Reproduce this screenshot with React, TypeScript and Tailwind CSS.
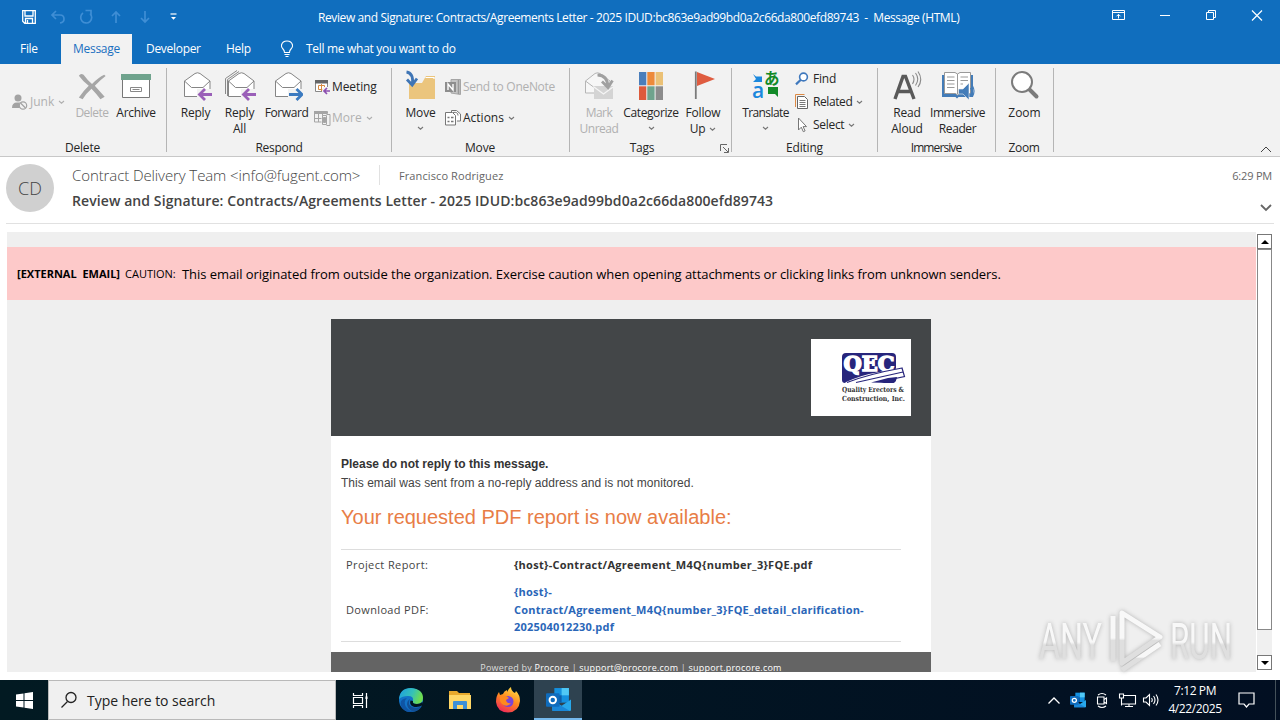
import * as React from "react";
import { clsx } from "clsx";

type IconProps = { className?: string };

function Caret({ className }: IconProps) {
  return (
    <svg width="7" height="5" viewBox="0 0 7 5" className={className}>
      <path d="M1 1l2.500 2.200L6 1" fill="none" stroke="currentColor" strokeWidth="1.100" />
    </svg>
  );
}

function EnvelopeIcon({ all, forward }: { all?: boolean; forward?: boolean }) {
  return (
    <svg width="32" height="32" viewBox="0 0 32 32" fill="none">
      {all && <path d="M1.500 25V9.500L13 1.500M3.500 27V10.500L15 2.500" stroke="#8a8a8a" />}
      <path d="M4.500 27.500V12L15 4.500q2.500-1.500 5 0L30 12v15.500z" fill="#fff" stroke="#858585" />
      <path d="M4.500 12l7 6.500H23l7-6.500" stroke="#858585" />
      <path d="M17 20h15v11H17z" fill="#f2f2f2" />
      {forward ? (
        <path d="M18 25.500h13M25.500 20l5.500 5.500-5.500 5.500" stroke="#3b7ac0" strokeWidth="2.800" />
      ) : (
        <path d="M32 25.500H19.500M25 20l-5.500 5.500 5.500 5.500" stroke="#9a5fb8" strokeWidth="2.800" />
      )}
    </svg>
  );
}

function DeleteIcon() {
  return (
    <svg width="30" height="28" viewBox="0 0 32 32" preserveAspectRatio="none" className="translate-y-0.5">
      <path d="M2 3q2-3 5-1 4 6 9 10.500Q23 5 29 2l1.500 1.500Q25 8 19 14.500q5 6 10.500 12.500L25 30q-5-7-9.500-12Q10 23 6 30L2 28Q7 20 12.500 14.500 6 9 2 3z" fill="#a6a6a6" />
    </svg>
  );
}

function ArchiveIcon() {
  return (
    <svg width="32" height="32" viewBox="0 0 32 32">
      <path d="M2.500 9h27v19.500h-27z" fill="#fff" stroke="#777" />
      <path d="M1 5h30v6H1z" fill="#6fa38d" />
      <path d="M10.500 18.500h11v4h-11zM12.500 20.500h7" fill="none" stroke="#888" />
    </svg>
  );
}

function JunkIcon() {
  return (
    <svg width="16" height="16" viewBox="0 0 16 16">
      <circle cx="6" cy="4" r="3.500" fill="#a3a3a3" />
      <path d="M0 14Q0 8.500 5 8.500h3l2 2V14z" fill="#a3a3a3" />
      <circle cx="11" cy="11.500" r="3.700" fill="#f2f2f2" stroke="#a3a3a3" strokeWidth="1.200" />
      <path d="M8.500 9l5 5" stroke="#a3a3a3" strokeWidth="1.200" />
    </svg>
  );
}

function MeetingIcon() {
  return (
    <svg width="16" height="16" viewBox="0 0 16 16" fill="none">
      <path d="M1.500 2.500h12v10h-12z" fill="#fff" stroke="#888" />
      <path d="M1 1h13v3.500H1z" fill="#666" />
      <path d="M4.500 6.500h6v4h-6zM7.500 5v7" stroke="#d98a3f" />
      <path d="M9.500 8h6.500v8H8v-5z" fill="#f2f2f2" />
      <path d="M16 12h-5.500M13 9l-3 3 3 3" stroke="#8c4fb0" strokeWidth="1.700" />
    </svg>
  );
}

function MoreIcon() {
  return (
    <svg width="17" height="16" viewBox="0 0 17 16" fill="none" stroke="#a5a5a5">
      <path d="M.5 2.500h13M.5 1.500h13v2H.5zM.5 1v11h7M.5 8.500h7M4.500 4v8M8.500 4v3" />
      <path d="M8.500 5.500h4v9h-4zM12.500 4.500h3.500v11h-3.500" fill="#f2f2f2" />
      <path d="M9.500 7.500h2v5h-2z" fill="#a5a5a5" />
    </svg>
  );
}

function MoveIcon() {
  return (
    <svg width="32" height="32" viewBox="0 0 32 32" fill="none">
      <path d="M4 14h13l4-7h9v23H4z" fill="#ebc57d" />
      <path d="M20.500 8.500h8.500v1.500" stroke="#fff" strokeWidth="1.200" />
      <path d="M1.500 3q7 1 6 12M2 10.500l5.200 5.500L12 9.500" stroke="#3f75b5" strokeWidth="2.800" />
    </svg>
  );
}

function OneNoteIcon() {
  return (
    <svg width="16" height="16" viewBox="0 0 16 16">
      <path d="M6 .5h9.500v15L6 14z" fill="#c4c4c4" stroke="#a5a5a5" />
      <path d="M13.500 1v14" stroke="#999" strokeWidth="1.500" />
      <path d="M0 3h11v10H0z" fill="#8e8e8e" />
      <path d="M3 11V5l5 6V5" fill="none" stroke="#fff" strokeWidth="1.400" />
    </svg>
  );
}

function ActionsIcon() {
  return (
    <svg width="16" height="16" viewBox="0 0 16 16" fill="none" stroke="#777">
      <path d="M6.500 2.500V.5h5l4 3.500v7H12" fill="#fff" />
      <path d="M.5 2.500h7l3 3v9.500H.5z" fill="#fff" />
      <path d="M2.500 7.500h2M6 7.500h2.500M2.500 11.500h2M6 11.500h2.500" strokeWidth="1.300" />
      <path d="M8 2.500q5-1 5 3" />
    </svg>
  );
}

function UnreadIcon() {
  return (
    <svg width="32" height="32" viewBox="0 0 32 32" fill="none">
      <path d="M2.500 24V12L12 4.500q2.500-1.500 5 0L27 12v12z" fill="#f7f7f7" stroke="#b5b5b5" />
      <path d="M2.500 12l8 6" stroke="#b5b5b5" />
      <path d="M11 17h19v13H11z" fill="#d4d4d4" />
      <path d="M11 18l9.500 7 9.500-7" stroke="#f5f5f5" strokeWidth="1.300" />
      <path d="M14.500 6q10 0 10.500 12M19 12.500l6 6 4.500-7" stroke="#a0a0a0" strokeWidth="2.800" />
    </svg>
  );
}

function CategorizeIcon() {
  return (
    <svg width="24" height="28" viewBox="0 0 24 28" className="translate-y-px">
      <path d="M0 0h7.300v13.300H0z" fill="#4a7ebb" />
      <path d="M8.300 0h7.300v13.300H8.300z" fill="#ed8a3a" />
      <path d="M16.600 0H24v13.300h-7.400z" fill="#ebc176" />
      <path d="M0 14.300h7.300V28H0z" fill="#dd5a3c" />
      <path d="M8.300 14.300h7.300V28H8.300z" fill="#6fa38d" />
      <path d="M16.600 14.300H24V28h-7.400z" fill="#8c8c8c" />
    </svg>
  );
}

function FlagIcon() {
  return (
    <svg width="22" height="30" viewBox="0 0 22 30" className="translate-x-0.5">
      <path d="M3 2l18 7-18 7z" fill="#df5c40" />
      <path d="M1.800 1.500V29" stroke="#7b7b7b" strokeWidth="1.800" />
    </svg>
  );
}

function TranslateIcon() {
  return (
    <svg width="28" height="32" viewBox="0 0 28 32" className="overflow-visible leading-none">
      <path d="M1 5l3 2.500h6v5.500H1l3-3z" fill="#1b88dd" />
      <path d="M26 18v10l-3-3h-7v-7z" fill="#128a28" />
      <text x="0" y="29" fontSize="21" fontWeight="600" fill="#1b88dd" fontFamily="Open Sans, sans-serif">a</text>
      <text x="12" y="15" fontSize="15.500" fontWeight="700" fill="#128a28" fontFamily="Noto Sans CJK JP, sans-serif">あ</text>
    </svg>
  );
}

function FindIcon() {
  return (
    <svg width="14" height="14" viewBox="0 0 14 14" fill="none" stroke="#3f78bd">
      <circle cx="8.500" cy="5" r="3.900" strokeWidth="1.600" fill="#fff" />
      <path d="M5.800 7.800L1 12.400" strokeWidth="2.200" />
    </svg>
  );
}

function RelatedIcon() {
  return (
    <svg width="14" height="16" viewBox="0 0 14 16" fill="none">
      <path d="M.5 13V.5h9" stroke="#dd8a45" />
      <path d="M2.500 2.500h7l3 3v9h-10z" fill="#fff" stroke="#666" />
      <path d="M4.500 6.500h6M4.500 8.500h6M4.500 10.500h6M4.500 12.500h6" stroke="#777" />
    </svg>
  );
}

function SelectIcon() {
  return (
    <svg width="12" height="16" viewBox="0 0 12 16">
      <path d="M3.500 1v12l2.800-2.800 2 4.500 1.800-.8-2-4.300h3.400z" fill="#fff" stroke="#777" />
    </svg>
  );
}

function ReadAloudIcon() {
  return (
    <svg width="30" height="32" viewBox="0 0 30 32" fill="none">
      <path d="M3 30L11 7.500h2.500L22 30M6 22.500h13" stroke="#595959" strokeWidth="3.400" />
      <path d="M20.500 6q3 4 0 9M23.500 4q4.500 6 0 12.500M26 2.500q5.500 8 0 15.500" stroke="#8a8a8a" strokeWidth="1.100" />
    </svg>
  );
}

function ImmersiveIcon() {
  return (
    <svg width="34" height="32" viewBox="0 0 34 32" fill="none">
      <path d="M1 6h31v22H17.500l-1.500 1.500-1.500-1.500H1z" fill="#437cb8" />
      <path d="M3.500 3.500H14l2.500 1.500L19 3.500h10.500v21H18.500l-2 1.500-2-1.500h-11z" fill="#fff" stroke="#999" />
      <path d="M16.500 5v20M6 8h7.500M6 11.500h7.500M6 15h7.500M6 18.500h7.500M19.500 8H27M19.500 11.500H27M19.500 15H22" stroke="#999" />
      <path d="M17.500 20h4.500l6-6v17L22 25h-4.500z" fill="#437cb8" stroke="#f2f2f2" strokeWidth="0.600" />
      <path d="M29.500 19q2 3.500 0 6.500M31.500 17q3 5 0 10.500" stroke="#437cb8" strokeWidth="1.200" />
    </svg>
  );
}

function ZoomIcon() {
  return (
    <svg width="30" height="30" viewBox="0 0 30 30" fill="none" stroke="#7b7b7b">
      <path d="M19 19l7.500 7.500" strokeWidth="4" strokeLinecap="round" />
      <circle cx="12" cy="12" r="10" strokeWidth="2" fill="#fff" />
    </svg>
  );
}

function OutlookIcon({ size }: { size: number }) {
  return (
    <svg width={size} height={size} viewBox="0 0 24 24">
      <path d="M8 1h14v14H8z" fill="#1490df" />
      <path d="M15 1h7v7h-7z" fill="#50c8f5" />
      <path d="M8 8h7v7H8z" fill="#0f5ea8" />
      <path d="M6 13l9 5 9-6v10q0 1-1 1H7q-1 0-1-1z" fill="#28a8ea" />
      <path d="M6 13l17 10H7q-1 0-1-1z" fill="#1a87d8" />
      <rect x="0" y="6" width="13" height="13" rx="1" fill="#0f6cbd" />
      <circle cx="6.500" cy="12.500" r="3.100" fill="none" stroke="#fff" strokeWidth="1.900" />
    </svg>
  );
}

function QecLogo() {
  return (
    <svg width="100" height="77" viewBox="0 0 100 77" className="bg-white">
      <path d="M35 14h46q4 0 4 4v22q0 4-4 4H34q-3 0-3-3V18q0-4 4-4z" fill="#27257c" />
      <text x="32.500" y="31.500" textLength="51" lengthAdjust="spacingAndGlyphs" fontSize="20" fontWeight="700" fill="#fff" stroke="#fff" strokeWidth="1.400" fontFamily="DejaVu Serif, serif">QEC</text>
      <path d="M34 43.500Q50 36 66 33.500L91 28.500l3 9-17 4q-7 3-10 3H36z" fill="#fff" />
      <path d="M60 43.500l17-4.500 9-1q-1 6-5 6z" fill="#27257c" />
      <path d="M36 43.500Q58 35 91 29l2.500 8.500-14 3M45 43.500L92 33" stroke="#27257c" strokeWidth="1.200" fill="none" />
      <g fontSize="7" fontWeight="700" fill="#333" fontFamily="DejaVu Serif, serif">
        <text x="31" y="52.500" textLength="62" lengthAdjust="spacingAndGlyphs">Quality Erectors &amp;</text>
        <text x="31" y="61.500" textLength="63" lengthAdjust="spacingAndGlyphs">Construction, Inc.</text>
      </g>
    </svg>
  );
}

function Group({
  label,
  className,
  labelClassName,
  children,
}: {
  label: string;
  className: string;
  labelClassName?: string;
  children: React.ReactNode;
}) {
  return (
    <div className={clsx("relative flex shrink-0 flex-col", className)}>
      <div className="flex h-[76px]">{children}</div>
      <div className={clsx("text-center leading-4", labelClassName)}>{label}</div>
      <div className="absolute top-1 right-0 h-[84px] w-px bg-[#b5b5b5]" />
    </div>
  );
}

function BigButton({
  icon,
  lines,
  className,
  caret,
  disabled,
}: {
  icon: React.ReactNode;
  lines: string[];
  className: string;
  caret?: "below" | "inline";
  disabled?: boolean;
}) {
  return (
    <button
      className={clsx(
        "flex shrink-0 flex-col items-center pt-[5px] leading-4 whitespace-nowrap",
        disabled && "text-[#b0b0b0]",
        className,
      )}
    >
      <span className="flex h-9 items-center pb-1">{icon}</span>
      {lines.map((line, i) => (
        <span key={line} className="flex items-center gap-1">
          {line}
          {caret === "inline" && i === lines.length - 1 && <Caret className="text-[#777]" />}
        </span>
      ))}
      {caret === "below" && <Caret className="mt-[5px] text-[#777]" />}
    </button>
  );
}

function SmallButton({
  icon,
  label,
  caret,
  disabled,
  className,
}: {
  icon: React.ReactNode;
  label: string;
  caret?: boolean;
  disabled?: boolean;
  className?: string;
}) {
  return (
    <button
      className={clsx(
        "flex items-center leading-4 whitespace-nowrap",
        disabled && "text-[#b0b0b0]",
        className,
      )}
    >
      <span className="flex w-[18px] shrink-0">{icon}</span>
      {label}
      {caret && <Caret className={clsx("ml-1", !disabled && "text-[#777]")} />}
    </button>
  );
}

function TitleBar() {
  return (
    <div className="flex h-[34px] items-center text-white">
      <div className="flex w-[318px] items-center pl-[22px]">
        <svg width="160" height="16" viewBox="0 0 160 16" fill="none" stroke="#fff">
          <path d="M.7 1.700h12.600v12.600H2.700l-2-2zM3 2v5h8V2M3.500 14v-4.500h7V14M5.500 11v3" strokeWidth="1.300" />
          <g stroke="#3f8ed5" strokeWidth="1.700">
            <path d="M34 2l-4 4 4 4M30.500 6H38q4 0 4 4 0 3.500-4 4" />
            <path d="M61 4a5.500 5.500 0 1 0 7 .5M63.500 1.500h5.500V7" />
            <path d="M94 14V3M90 7l4-4 4 4M123 2v11M119 9l4 4 4-4" />
          </g>
          <path d="M148.500 5h6" strokeWidth="1.200" />
          <path d="M149 8h5l-2.500 2.700z" fill="#fff" stroke="none" />
        </svg>
      </div>
      <div className="w-[642px] pt-0.5 text-xs tracking-[-0.4px] whitespace-nowrap">
        Review and Signature: Contracts/Agreements Letter - 2025 IDUD:bc863e9ad99bd0a2c66da800efd89743&nbsp; -&nbsp; Message (HTML)
      </div>
      <svg width="152" height="14" viewBox="0 0 152 14" fill="none" stroke="#fff" className="ml-[152px] -mt-1">
        <path d="M.5 2.500h12v9H.5zM.5 4.500h12M6.500 10.500v-4M4.500 8.300l2-2 2 2" />
        <path d="M48 7.500h10" />
        <path d="M94.500 4.500h7v7h-7zM96.500 4.500v-2h7v7h-2" />
        <path d="M140 2.500l10 10M150 2.500l-10 10" strokeWidth="1.200" />
      </svg>
    </div>
  );
}

function Tabs() {
  return (
    <div className="flex h-[30px] items-center text-xs tracking-[-0.3px] text-white">
      <div className="w-[61px] pl-5">File</div>
      <div className="flex h-full w-[71px] items-center justify-center bg-[#f2f2f2] text-[#1a6fc0]">Message</div>
      <div className="w-[94px] pl-3.5">Developer</div>
      <div className="w-[54px]">Help</div>
      <svg width="14" height="18" viewBox="0 0 14 18" fill="none" stroke="#fff" strokeWidth="1.100">
        <path d="M4.500 12.500Q4.500 10.500 3 9 1 7 1.500 5 2.500 1 7 1t5.500 4q.5 2-1.500 4-1.500 1.500-1.500 3.500zM4.500 14.500h5M5.500 16.500h3" />
      </svg>
      <div className="pl-3">Tell me what you want to do</div>
    </div>
  );
}

function Ribbon() {
  return (
    <div className="flex h-[93px] border-b border-[#c8c8c8] bg-[#f2f2f2] text-xs text-[#262626]">
      <Group label="Delete" className="w-[167px]" labelClassName="pr-0.5 tracking-[-0.2px]">
        <div className="flex w-[70px] items-center pl-3">
          <SmallButton icon={<JunkIcon />} label="Junk" caret disabled />
        </div>
        <BigButton icon={<DeleteIcon />} lines={["Delete"]} className="w-[44px] tracking-[-0.5px]" disabled />
        <BigButton icon={<ArchiveIcon />} lines={["Archive"]} className="w-[44px] tracking-[-0.3px]" />
      </Group>
      <Group label="Respond" className="w-[225px] pl-[5px]" labelClassName="pr-1.5 tracking-[-0.3px]">
        <BigButton icon={<EnvelopeIcon />} lines={["Reply"]} className="w-[47px] tracking-[-0.2px]" />
        <BigButton icon={<EnvelopeIcon all />} lines={["Reply", "All"]} className="w-[41px] tracking-[-0.2px]" />
        <BigButton icon={<EnvelopeIcon forward />} lines={["Forward"]} className="w-[53px] tracking-[-0.4px]" />
        <div className="flex flex-col gap-[15px] pt-[15px] pl-px">
          <SmallButton icon={<MeetingIcon />} label="Meeting" className="tracking-[-0.1px]" />
          <SmallButton icon={<MoreIcon />} label="More" caret disabled />
        </div>
      </Group>
      <Group label="Move" className="w-[178px] pl-[5px]" labelClassName="pr-[7px] tracking-[-0.2px]">
        <BigButton icon={<MoveIcon />} lines={["Move"]} className="w-[47px] tracking-[-0.2px]" caret="below" />
        <div className="flex flex-col gap-[15px] pt-[15px] pl-px">
          <SmallButton icon={<OneNoteIcon />} label="Send to OneNote" className="tracking-[-0.3px]" disabled />
          <SmallButton icon={<ActionsIcon />} label="Actions" caret />
        </div>
      </Group>
      <Group label="Tags" className="w-[162px] pl-1.5" labelClassName="pr-6 tracking-[-0.2px]">
        <BigButton icon={<UnreadIcon />} lines={["Mark", "Unread"]} className="w-[46px] tracking-[-0.5px]" disabled />
        <BigButton icon={<CategorizeIcon />} lines={["Categorize"]} className="w-[58px] tracking-[-0.4px]" caret="below" />
        <BigButton icon={<FlagIcon />} lines={["Follow", "Up"]} className="w-[46px] tracking-[-0.2px]" caret="inline" />
        <svg width="9" height="9" viewBox="0 0 9 9" fill="none" stroke="#666" className="absolute top-20 right-[3px]">
          <path d="M.5 7V.5H7M3 3l5 5M8.500 4v4.500H4" />
        </svg>
      </Group>
      <Group label="Editing" className="w-[146px] pl-[5px]" labelClassName="pr-1.5 tracking-[-0.2px]">
        <BigButton icon={<TranslateIcon />} lines={["Translate"]} className="w-[57px] tracking-[-0.6px]" caret="below" />
        <div className="flex flex-col gap-[7px] pt-[7px] pl-px">
          <SmallButton icon={<FindIcon />} label="Find" className="tracking-[-0.2px]" />
          <SmallButton icon={<RelatedIcon />} label="Related" className="tracking-[-0.4px]" caret />
          <SmallButton icon={<SelectIcon />} label="Select" className="tracking-[-0.3px]" caret />
        </div>
      </Group>
      <Group label="Immersive" className="w-[118px] pl-2.5" labelClassName="pr-3 tracking-[-0.9px]">
        <BigButton icon={<ReadAloudIcon />} lines={["Read", "Aloud"]} className="w-[38px] tracking-[-0.2px]" />
        <BigButton icon={<ImmersiveIcon />} lines={["Immersive", "Reader"]} className="w-[63px] tracking-[-0.4px]" />
      </Group>
      <Group label="Zoom" className="w-[58px]" labelClassName="pr-0.5 tracking-[-0.3px]">
        <BigButton icon={<ZoomIcon />} lines={["Zoom"]} className="w-[57px]" />
      </Group>
      <div className="flex flex-1 items-end justify-end pr-2 pb-[3px]">
        <svg width="12" height="7" viewBox="0 0 12 7" fill="none" stroke="#444">
          <path d="M1 6l5-5 5 5" />
        </svg>
      </div>
    </div>
  );
}

function MessageHeader() {
  return (
    <div className="mx-1.5 flex h-[67px] border-b border-[#e1e1e1]">
      <div className="mt-[7px] flex size-12 items-center justify-center rounded-full bg-[#d0d0d0] text-lg font-light text-[#444]">
        CD
      </div>
      <div className="flex flex-1 flex-col pl-[18px]">
        <div className="mt-2 flex h-5 items-center text-[#666]">
          <span className="w-[307px] text-[15px] font-light tracking-[-0.1px] whitespace-nowrap text-[#444]">
            Contract Delivery Team &lt;info@fugent.com&gt;
          </span>
          <span className="h-5 w-5 border-l border-[#e1e1e1]" />
          <span className="pt-0.5 text-[11px] tracking-[0.1px]">Francisco Rodriguez</span>
        </div>
        <div className="mt-1.5 text-sm leading-5 font-semibold tracking-[0.09px] whitespace-nowrap text-[#444]">
          Review and Signature: Contracts/Agreements Letter - 2025 IDUD:bc863e9ad99bd0a2c66da800efd89743
        </div>
      </div>
      <div className="flex flex-col items-end pt-[11px] pr-0.5 text-[11px] leading-4 tracking-[-0.2px] text-[#666]">
        6:29 PM
        <svg width="12" height="8" viewBox="0 0 12 8" fill="none" stroke="#666" strokeWidth="1.800" className="mt-5">
          <path d="M1 1l5 5 5-5" />
        </svg>
      </div>
    </div>
  );
}

function ScrollBar() {
  return (
    <div className="flex w-4 flex-col pt-0.5 pb-0.5">
      <div className="flex h-[15px] w-[15px] items-center justify-center border border-[#777] bg-white">
        <svg width="8" height="4" viewBox="0 0 8 4"><path d="M4 0l4 4H0z" /></svg>
      </div>
      <div className="h-[381px] w-[15px] border border-[#888] bg-white" />
      <div className="w-[15px] flex-1 bg-[#f0f0f0]" />
      <div className="flex h-[15px] w-[15px] items-center justify-center border border-[#777] bg-white">
        <svg width="8" height="4" viewBox="0 0 8 4"><path d="M0 0h8L4 4z" /></svg>
      </div>
    </div>
  );
}

function MessageBody() {
  return (
    <div className="mt-2 flex h-[440px] pl-[7px]">
      <div className="w-[1249px] overflow-hidden bg-[#efefef] pt-[15px]">
        <div className="flex h-[53px] items-center bg-[#fdc9c9] pt-0.5 pl-[10px] whitespace-nowrap text-black">
          <span className="w-[108px] text-[11px] font-bold">[EXTERNAL&nbsp; EMAIL]</span>
          <span className="w-[57px] text-[11px]">CAUTION:</span>
          <span className="text-[13px] tracking-[-0.06px]">
            This email originated from outside the organization. Exercise caution when opening attachments or clicking links from unknown senders.
          </span>
        </div>
        <div className="mt-[19px] ml-[324px] w-[600px] bg-white font-['Liberation_Sans',sans-serif] text-[#444]">
          <div className="flex h-[117px] justify-end bg-[#434648] pt-5 pr-5">
            <QecLogo />
          </div>
          <div className="h-[216px] pt-[19px] pr-[30px] pl-[10px]">
            <div className="text-xs leading-[19px] font-bold text-[#333]">Please do not reply to this message.</div>
            <div className="text-xs leading-[19px] tracking-[0.03px]">This email was sent from a no-reply address and is not monitored.</div>
            <div className="pt-2.5 text-xl leading-7 text-[#e87d46]">Your requested PDF report is now available:</div>
            <div className="mt-[18px] grid h-[93px] grid-cols-[168px_1fr] grid-rows-[29px_1fr] border-y border-[#ddd] pl-[5px] font-['Open_Sans',sans-serif] text-[11px]">
              <div className="leading-[29px] tracking-[0.4px]">Project Report:</div>
              <div className="leading-[29px] font-bold tracking-[0.28px] text-[#333]">
                {"{host}-Contract/Agreement_M4Q{number_3}FQE.pdf"}
              </div>
              <div className="pt-[22px] leading-[18px] tracking-[0.35px]">Download PDF:</div>
              <a className="pt-1 leading-[17.500px] font-bold tracking-[0.21px] text-[#2a66b8]">
                {"{host}-"}
                <br />
                {"Contract/Agreement_M4Q{number_3}FQE_detail_clarification-"}
                <br />
                202504012230.pdf
              </a>
            </div>
          </div>
          <div className="flex h-10 justify-center bg-[#646464] pt-2 font-['Open_Sans',sans-serif] text-[9px] leading-4 tracking-[0.22px] whitespace-nowrap text-[#ddd]">
            Powered by&nbsp;<span className="text-white">Procore</span>&nbsp;|&nbsp;<span className="text-white">support@procore.com</span>&nbsp;|&nbsp;<span className="text-white">support.procore.com</span>
          </div>
        </div>
      </div>
      <div className="w-px bg-white" />
      <ScrollBar />
    </div>
  );
}

function Watermark() {
  return (
    <div className="absolute top-[606px] left-[1034px] opacity-90">
      <svg width="204" height="70" viewBox="0 0 204 70" className="drop-shadow-[0_0_2px_#aaa]">
        <defs>
          <linearGradient id="wm" x1="0" y1="0" x2="0" y2="1">
            <stop offset="0.500" stopColor="#fafafa" />
            <stop offset="0.550" stopColor="#dedede" />
          </linearGradient>
        </defs>
        <g fill="url(#wm)" fontFamily="Roboto, sans-serif" fontSize="50">
          <text x="5" y="53" textLength="63" lengthAdjust="spacingAndGlyphs">ANY</text>
          <text x="136" y="53" textLength="62" lengthAdjust="spacingAndGlyphs">RUN</text>
        </g>
        <g fill="none" stroke="url(#wm)" strokeWidth="5" strokeLinejoin="round">
          <path d="M79 10v45M88 7l38 24-38 26z" />
          <path d="M88 64l38-26" />
        </g>
      </svg>
    </div>
  );
}

function TaskBar() {
  return (
    <div className="mt-2 flex h-10 items-center bg-linear-to-r from-[#021a22] to-[#020f22] text-xs text-white">
      <div className="flex w-12 justify-center">
        <svg width="17" height="17" viewBox="0 0 17 17" fill="#fff">
          <path d="M0 2.500l7.500-1v6.500H0zM8.500 1.300L17 0v8H8.500zM0 9h7.500v6.500l-7.500-1zM8.500 9H17v8l-8.500-1.200z" />
        </svg>
      </div>
      <div className="flex h-full w-72 items-center border border-[#b9b9b9] bg-[#f0f0f0] pl-[11px] text-[#222]">
        <svg width="18" height="18" viewBox="0 0 18 18" fill="none" stroke="#222" strokeWidth="1.300">
          <circle cx="11" cy="6.500" r="5" />
          <path d="M7.500 10.500L1.500 16.500" />
        </svg>
        <span className="pt-0.5 pl-[9px] text-sm tracking-[-0.03px]">Type here to search</span>
      </div>
      <div className="flex w-12 justify-center">
        <svg width="17" height="16" viewBox="0 0 17 16" fill="none" stroke="#fff" strokeWidth="1.200">
          <path d="M1.500 1v2.500h9V1M1.500 5.500h9v6h-9zM1.500 16v-2.500h9V16M14.500 1v15" />
          <path d="M13.500 4.500h2v2.500h-2z" fill="#fff" stroke="none" />
        </svg>
      </div>
      <div className="flex w-[54px] justify-center">
        <svg width="26" height="26" viewBox="0 0 26 26">
          <defs>
            <linearGradient id="edge" x1="0" y1="0" x2="1" y2="0.300">
              <stop offset="0" stopColor="#1b9de2" />
              <stop offset="0.600" stopColor="#35c1b8" />
              <stop offset="1" stopColor="#6edc4f" />
            </linearGradient>
          </defs>
          <circle cx="13" cy="13" r="12" fill="#1273c8" />
          <path d="M1 12Q2 1 13 1q12 1 12 10 0 6-7 6-4 0-3-3 1-5-5-5-6 0-9 3z" fill="url(#edge)" />
          <path d="M9 11q-4 3-1 9 3 4 8 4.500Q7 27 3 19q-2-7 6-8z" fill="#0f55a5" />
          <path d="M12 12q-3 5 2 8 5 2 10-1-3 5-8 5.500-6-1-7-7 0-4 3-5.500z" fill="#124f95" />
          <path d="M15 14q-1 3 4 3 3 0 5.500-2l.5 3q-5 3-10 1.500-4-2-2.500-6z" fill="#021420" />
        </svg>
      </div>
      <div className="flex w-11 justify-center">
        <svg width="22" height="20" viewBox="0 0 22 20">
          <path d="M0 1h8l2 2h11v5H0z" fill="#e8a92c" />
          <path d="M0 5h22v14H0z" fill="#ffd766" />
          <path d="M4 19v-7q0-1 1-1h12q1 0 1 1v7h-4v-4H8v4z" fill="#3d8fd6" />
        </svg>
      </div>
      <div className="flex w-[52px] justify-center">
        <svg width="24" height="26" viewBox="0 0 24 26">
          <defs>
            <linearGradient id="fox" x1="0.800" y1="0" x2="0.300" y2="1">
              <stop offset="0" stopColor="#ffe24a" />
              <stop offset="0.500" stopColor="#ff8a1e" />
              <stop offset="1" stopColor="#f0285a" />
            </linearGradient>
          </defs>
          <path d="M3 5l1 3 3-1q1-3 4-4v2q2-4 4-5 0 4 4 6l1-2q4 4 4 10-1 11-12 11.500Q1 25 0 15 0 9 3 5z" fill="url(#fox)" />
          <circle cx="12" cy="14.500" r="5.500" fill="#7a45d8" />
          <path d="M4 10q5-3 9 1l-3 2q1 4 5 3-4 5-9 1-3-3-2-7z" fill="#ff8a1e" />
        </svg>
      </div>
      <div className="flex h-full w-12 items-center justify-center border-b-2 border-[#76b9ed] bg-[#2e4250]">
        <OutlookIcon size={25} />
      </div>
      <div className="ml-auto flex items-center">
        <svg width="12" height="7" viewBox="0 0 12 7" fill="none" stroke="#fff" strokeWidth="1.300">
          <path d="M.5 6.500L6 1l5.500 5.500" />
        </svg>
        <div className="ml-2.5">
          <OutlookIcon size={16} />
        </div>
        <svg width="64" height="18" viewBox="0 0 64 18" fill="none" stroke="#fff" strokeWidth="1.100" className="ml-2.5">
          <path d="M1.500 6h6.500v7H1.500zM8 8.500l2.500-1.500v5.500L8 11M2 4q4-3 8 0M2 15q4 3 8 0" />
          <path d="M27 4.500h12.500v8.500H26M33 13v2.500M29 15.500h8M23.500 3h4v4h-4zM25.500 7v7.500" />
          <path d="M47.500 7H50l3.500-3.500v11L50 11h-2.500zM55.500 7q1.500 2 0 4M57.500 5q3 4 0 8M60 3.500q4 5.500 0 11" />
        </svg>
        <div className="ml-2 w-[54px] text-center leading-[18px] tracking-[-0.4px] whitespace-nowrap">
          7:12 PM
          <br />
          4/22/2025
        </div>
        <svg width="18" height="18" viewBox="0 0 18 18" fill="none" stroke="#fff" strokeWidth="1.200" className="mr-[19px] ml-4">
          <path d="M1 2h15v11h-5l-2.500 3L6 13H1z" />
        </svg>
        <div className="mr-1 h-10 w-px bg-[#44515a]" />
      </div>
    </div>
  );
}

export default function App() {
  return (
    <div className="relative flex h-[720px] w-[1280px] flex-col overflow-hidden bg-white font-['Open_Sans',sans-serif]">
      <div className="bg-[#106ebe]">
        <TitleBar />
        <Tabs />
      </div>
      <Ribbon />
      <MessageHeader />
      <MessageBody />
      <TaskBar />
      <Watermark />
    </div>
  );
}
